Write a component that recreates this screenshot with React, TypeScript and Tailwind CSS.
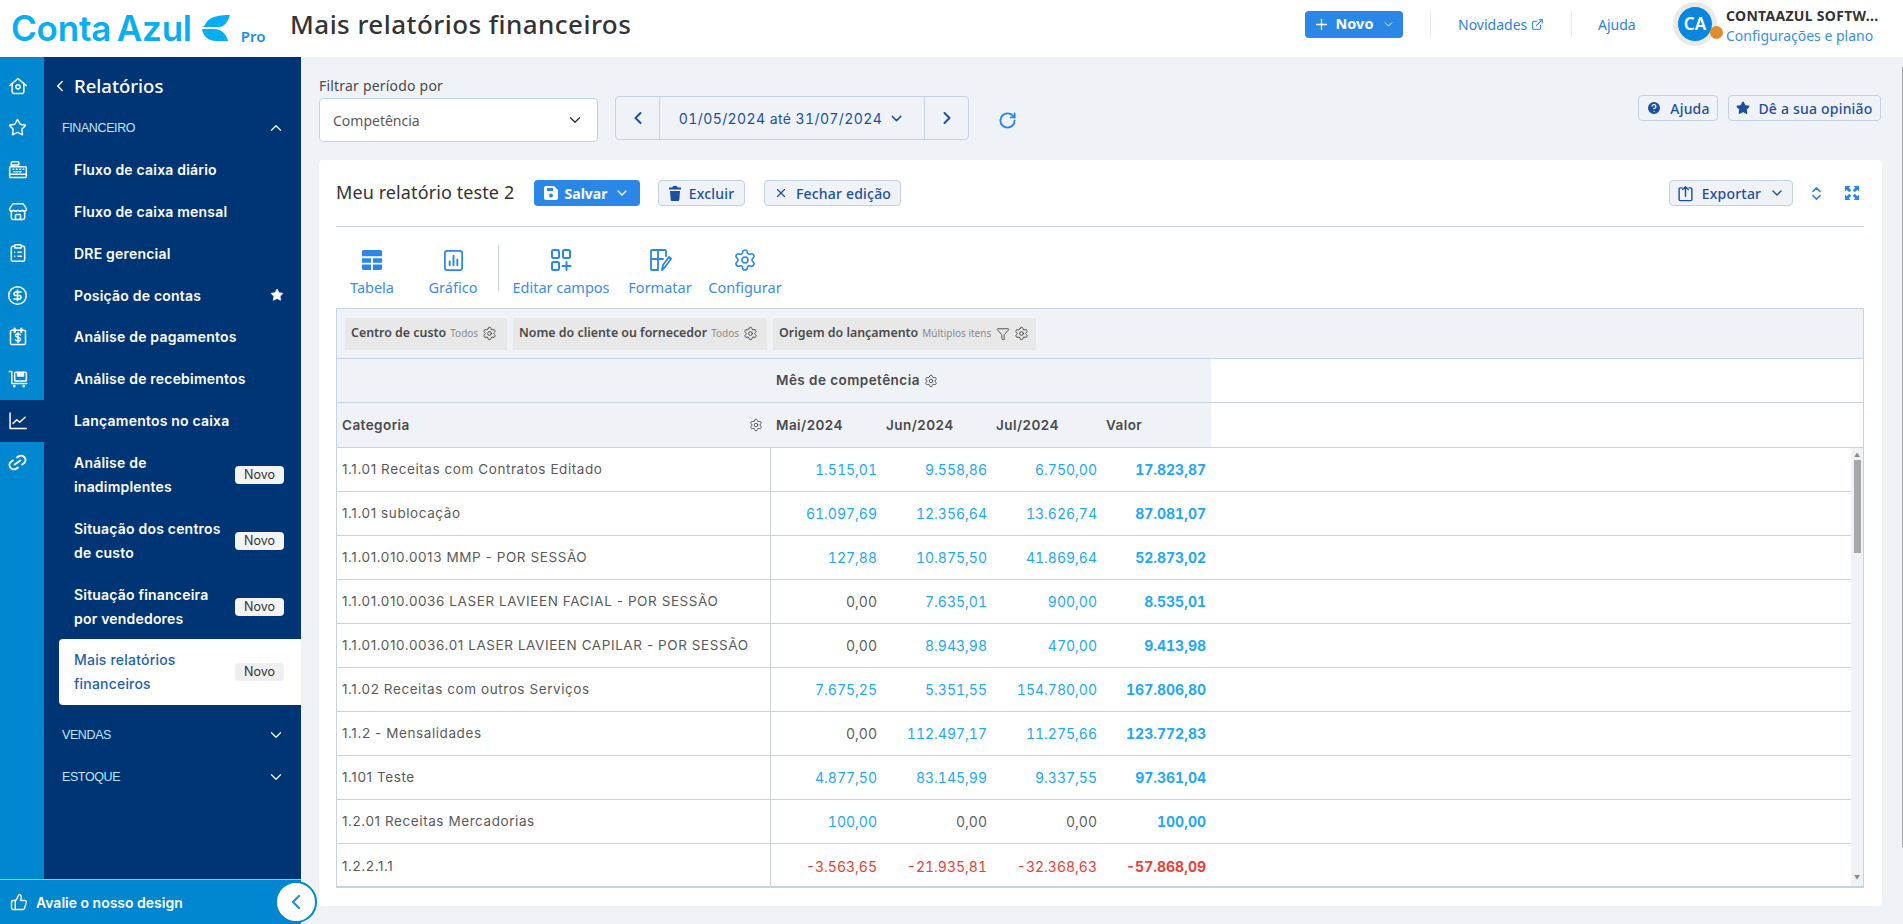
import type { ReactNode } from "react";
import {
  ChevronDown, ChevronLeft, ChevronRight, ChevronUp, ChevronsUpDown, CircleDollarSign, CircleHelp, ClipboardList,
  ExternalLink, Filter, Link2, Plus, RotateCw, Settings, Star, Store, ThumbsUp, X,
} from "lucide-react";

const rows = [
  ["1.1.01 Receitas com Contratos Editado", "1.515,01", "9.558,86", "6.750,00", "17.823,87"],
  ["1.1.01 sublocação", "61.097,69", "12.356,64", "13.626,74", "87.081,07"],
  ["1.1.01.010.0013 MMP - POR SESSÃO", "127,88", "10.875,50", "41.869,64", "52.873,02"],
  ["1.1.01.010.0036 LASER LAVIEEN FACIAL - POR SESSÃO", "0,00", "7.635,01", "900,00", "8.535,01"],
  ["1.1.01.010.0036.01 LASER LAVIEEN CAPILAR - POR SESSÃO", "0,00", "8.943,98", "470,00", "9.413,98"],
  ["1.1.02 Receitas com outros Serviços", "7.675,25", "5.351,55", "154.780,00", "167.806,80"],
  ["1.1.2 - Mensalidades", "0,00", "112.497,17", "11.275,66", "123.772,83"],
  ["1.101 Teste", "4.877,50", "83.145,99", "9.337,55", "97.361,04"],
  ["1.2.01 Receitas Mercadorias", "100,00", "0,00", "0,00", "100,00"],
  ["1.2.2.1.1", "-3.563,65", "-21.935,81", "-32.368,63", "-57.868,09"],
];

function numColor(v: string) {
  if (v.startsWith("-")) return "text-[#ea3f38]";
  if (v === "0,00") return "text-[#5f5f5f]";
  return "text-[#1fa8f6]";
}

function Svg({ children, size = 20, stroke = 1.8 }: { children: ReactNode; size?: number; stroke?: number }) {
  return (
    <svg width={size} height={size} viewBox="0 0 24 24" fill="none" stroke="currentColor" strokeWidth={stroke} strokeLinecap="round" strokeLinejoin="round">
      {children}
    </svg>
  );
}

function RailIcon({ children, active }: { children: ReactNode; active?: boolean }) {
  return (
    <div className={`h-[41.875px] pr-[9px] flex items-center justify-center text-white ${active ? "bg-[#003575]" : ""}`}>
      {children}
    </div>
  );
}

function Rail() {
  return (
    <div className="w-[44px] shrink-0 bg-[#0087d0] pt-[8px]">
      <RailIcon>
        <Svg>
          <path d="M2 11.5 12 3l10 8.5" />
          <path d="M5 9.5V19a2 2 0 0 0 2 2h10a2 2 0 0 0 2-2V9.5" />
          <circle cx="12" cy="13" r="2.5" />
        </Svg>
      </RailIcon>
      <RailIcon><Star size={19} strokeWidth={1.8} /></RailIcon>
      <RailIcon>
        <Svg>
          <rect x="4" y="2" width="9" height="4" rx="1" />
          <path d="M4 6v2M3 8h18a1 1 0 0 1 1 1v8H2V9a1 1 0 0 1 1-1z" />
          <path d="M2 17v3a1 1 0 0 0 1 1h18a1 1 0 0 0 1-1v-3" />
          <path d="M6 11h1M10 11h1M14 11h1M18 11h1M7 14h10" strokeDasharray="1.5 2" />
        </Svg>
      </RailIcon>
      <RailIcon><Store size={20} strokeWidth={1.8} /></RailIcon>
      <RailIcon><ClipboardList size={20} strokeWidth={1.8} /></RailIcon>
      <RailIcon><CircleDollarSign size={21} strokeWidth={1.8} /></RailIcon>
      <RailIcon>
        <Svg>
          <rect x="3" y="4" width="18" height="17" rx="1.5" />
          <path d="M8 2v4M16 2v4" strokeWidth="2.6" />
          <path d="M15 9.5c-.5-1-1.5-1.5-3-1.5-1.8 0-3 .9-3 2.2 0 3 6 1.6 6 4.4 0 1.3-1.3 2.2-3 2.2-1.5 0-2.6-.6-3.1-1.6M12 6.8V18.5" strokeWidth="1.7" />
        </Svg>
      </RailIcon>
      <RailIcon>
        <Svg>
          <path d="M1.5 3H4.5V17.5H22.5" />
          <rect x="8" y="4" width="14" height="10.5" rx="1" />
          <path d="M11.5 4v4.5h7V4" fill="currentColor" />
          <circle cx="7.5" cy="20.5" r=".8" />
          <circle cx="19" cy="20.5" r=".8" />
        </Svg>
      </RailIcon>
      <RailIcon active>
        <Svg>
          <path d="M2.5 2.5V21H22" />
          <path d="M6 15l4.5-4.5 3.5 3 6.5-6" />
        </Svg>
      </RailIcon>
      <RailIcon><Link2 size={21} strokeWidth={2.2} className="-rotate-[35deg]" /></RailIcon>
    </div>
  );
}

function NavItem({ label, star, badge, active }: { label: ReactNode; star?: boolean; badge?: boolean; active?: boolean }) {
  return (
    <div
      className={`flex items-center justify-between pr-[17px] text-[14px] tracking-[0.2px] ${badge ? "h-[66px] leading-[24px]" : "h-[41.75px]"} ${
        active ? "ml-[15px] pl-[15px] bg-white rounded-l-[4px] text-[#1f5fb4] font-medium" : `pl-[30px] text-white font-semibold ${badge ? "pt-[1px]" : ""}`
      }`}
    >
      <span>{label}</span>
      {star && <Star size={14} fill="white" strokeWidth={1} />}
      {badge && (
        <span className={`w-[49px] h-[18px] rounded-[4px] flex items-center justify-center text-[12.5px] tracking-normal leading-none font-normal text-[#333] ${active ? "bg-[#efefef]" : "bg-[#f4f4f4]"}`}>
          Novo
        </span>
      )}
    </div>
  );
}

function SectionRow({ label, open }: { label: string; open?: boolean }) {
  return (
    <div className="h-[42px] flex items-center justify-between pl-[18px] pr-[16px] text-[#bfe4fb] font-['Liberation_Sans',sans-serif] text-[12.5px]">
      <span className="tracking-[-0.4px]">{label}</span>
      {open ? <ChevronUp size={18} className="text-white" strokeWidth={1.6} /> : <ChevronDown size={18} className="text-white" strokeWidth={1.6} />}
    </div>
  );
}

function Sidebar() {
  return (
    <aside className="relative w-[301px] shrink-0 flex flex-col">
      <div className="flex-1 flex">
        <Rail />
        <nav className="flex-1 bg-[#003575] pt-[8px]">
          <div className="h-[42px] flex items-center pl-[7px] text-white font-['Noto_Sans',sans-serif] font-medium text-[18.5px]">
            <ChevronLeft size={18} strokeWidth={2} />
            <span className="ml-[5px]">Relatórios</span>
          </div>
          <SectionRow label="FINANCEIRO" open />
          <NavItem label="Fluxo de caixa diário" />
          <NavItem label="Fluxo de caixa mensal" />
          <NavItem label="DRE gerencial" />
          <NavItem label="Posição de contas" star />
          <NavItem label="Análise de pagamentos" />
          <NavItem label="Análise de recebimentos" />
          <NavItem label="Lançamentos no caixa" />
          <NavItem label={<>Análise de<br />inadimplentes</>} badge />
          <NavItem label={<>Situação dos centros<br />de custo</>} badge />
          <NavItem label={<>Situação financeira<br />por vendedores</>} badge />
          <NavItem label={<>Mais relatórios<br />financeiros</>} badge active />
          <div className="h-[9px]" />
          <SectionRow label="VENDAS" />
          <SectionRow label="ESTOQUE" />
        </nav>
      </div>
      <div className="h-[45px] shrink-0 bg-[#0087d0] border-t border-[#8fc8ea] flex items-center pl-[10px] text-white font-semibold text-[14px] gap-[8px]">
        <ThumbsUp size={18} strokeWidth={1.8} />
        <span>Avalie o nosso design</span>
      </div>
      <div className="absolute left-[275px] bottom-[1px] w-[42px] h-[42px] rounded-full bg-white border-2 border-[#0087d0] flex items-center justify-center text-[#2a87e8]">
        <ChevronLeft size={24} strokeWidth={2.2} />
      </div>
    </aside>
  );
}

function Header() {
  return (
    <header className="h-[57px] shrink-0 bg-white flex items-center pb-[9px] font-['Noto_Sans',sans-serif]">
      <div className="w-[290px] shrink-0 pl-[11px] pt-[8px] flex items-center">
        <span className="font-['Inter',sans-serif] font-semibold text-[35px] leading-none text-[#08aef2] tracking-[-0.2px] [word-spacing:-3px] whitespace-nowrap">Conta Azul</span>
        <svg width="28" height="26" viewBox="0 0 28 26" className="ml-[10px] shrink-0" fill="#08aef2">
          <path d="M28 0C18 0 8 1 4 8 3 10 2 11.5 0 12h17c6 0 9-6 11-12z" />
          <path d="M0 14c1 7 6 12 14 12h12c-2-7-6-12-14-12z" />
        </svg>
        <span className="ml-[11px] mt-[16px] text-[15px] font-semibold text-[#1c8fe0]">Pro</span>
      </div>
      <h1 className="text-[26px] mt-[1px] font-medium text-[#333] tracking-[0.45px] whitespace-nowrap">Mais relatórios financeiros</h1>
      <div className="ml-auto flex items-center pr-[22px]">
        <button className="w-[98px] h-[27px] rounded-[4px] bg-[#2a87e8] text-white flex items-center justify-center gap-[6px] text-[14.5px] font-bold">
          <Plus size={17} strokeWidth={1.8} />
          Novo
          <ChevronDown size={13} className="ml-[3px]" strokeWidth={1.6} />
        </button>
        <div className="ml-[27px] w-px h-[26px] bg-[#e8edf3]" />
        <a className="ml-[27px] w-[86px] flex items-center gap-[4px] text-[14px] text-[#2f80e4]">
          Novidades
          <ExternalLink size={13} strokeWidth={2} />
        </a>
        <div className="ml-[27px] w-px h-[26px] bg-[#e8edf3]" />
        <a className="ml-[26px] w-[40px] text-[14px] text-[#2f80e4]">Ajuda</a>
        <div className="relative ml-[35px] w-[44px] h-[44px] rounded-full bg-[#e9e9e9] flex items-center justify-center">
          <div className="w-[34px] h-[34px] rounded-full bg-[#0a87dc] text-white flex items-center justify-center text-[17px] font-semibold">CA</div>
          <span className="absolute left-[37px] top-[24px] w-[13px] h-[13px] rounded-full bg-[#e08b2e]" />
        </div>
        <div className="ml-[9px] w-[155px] pt-[5px]">
          <div className="text-[14px] font-bold text-[#333] leading-[18px] tracking-[0.3px] whitespace-nowrap">CONTAAZUL SOFTW...</div>
          <div className="text-[14px] text-[#3d8de8] leading-[20px] mt-[1px] whitespace-nowrap">Configurações e plano</div>
        </div>
      </div>
    </header>
  );
}

function OutlineBtn({ icon, label, trail, className }: { icon: ReactNode; label: string; trail?: ReactNode; className: string }) {
  return (
    <button className={`h-[26px] rounded-[4px] border border-[#c5d0e0] bg-[#eff2f7] text-[#1d4fa0] text-[14px] tracking-[0.2px] font-medium flex items-center justify-center gap-[8px] whitespace-nowrap ${className}`}>
      {icon}
      {label}
      {trail}
    </button>
  );
}

function FilterBar() {
  return (
    <div className="flex items-start h-[103px] pl-[18px] pr-[22px] pt-[22px] font-['Noto_Sans',sans-serif]">
      <div className="w-[279px]">
        <div className="text-[14px] tracking-[0.2px] leading-[14px] text-[#4a4a4a] mb-[5px]">Filtrar período por</div>
        <div className="h-[44px] bg-white border border-[#c5d0e0] rounded-[4px] flex items-center justify-between pl-[13px] pr-[13px] text-[14px] text-[#5a5a5a]">
          Competência
          <ChevronDown size={18} strokeWidth={1.8} className="text-[#333]" />
        </div>
      </div>
      <div className="ml-[17px] mt-[17px] h-[44px] w-[354px] border border-[#c5d0e0] rounded-[4px] flex items-center text-[#1d4fa0]">
        <div className="w-[44px] h-full flex items-center justify-center border-r border-[#c5d0e0]"><ChevronLeft size={20} strokeWidth={2.4} /></div>
        <div className="flex-1 flex items-center justify-center gap-[6px] text-[14px] tracking-[0.4px] tabular-nums font-['Inter',sans-serif]">
          01/05/2024 até 31/07/2024
          <ChevronDown size={17} strokeWidth={2} />
        </div>
        <div className="w-[44px] h-full flex items-center justify-center border-l border-[#c5d0e0]"><ChevronRight size={20} strokeWidth={2.4} /></div>
      </div>
      <RotateCw size={19} strokeWidth={2.4} className="ml-[29px] mt-[32px] text-[#2a87e8]" />
      <div className="ml-auto mt-[16px] flex gap-[10px]">
        <OutlineBtn className="w-[80px]" icon={<CircleHelp size={16} fill="#1d4fa0" stroke="#eff2f7" />} label="Ajuda" />
        <OutlineBtn className="w-[153px]" icon={<Star size={14} fill="#1d4fa0" />} label="Dê a sua opinião" />
      </div>
    </div>
  );
}

function ToolBtn({ icon, label, className }: { icon: ReactNode; label: string; className: string }) {
  return (
    <div className={`flex flex-col items-center text-[#2a87e8] ${className}`}>
      <div className="h-[26px] flex items-center">{icon}</div>
      <span className="text-[14.5px] leading-[18px] mt-[5px] whitespace-nowrap text-[#3d8de8]">{label}</span>
    </div>
  );
}

function Chip({ title, value, className, filter }: { title: string; value: string; className: string; filter?: boolean }) {
  return (
    <div className={`h-[32px] bg-[#e8e8e8] flex items-center pl-[6px] text-[12.4px] whitespace-nowrap ${className}`}>
      <span className="font-semibold text-[#4a4a4a]">{title}</span>
      <span className="ml-[4px] text-[10px] text-[#8a8a8a]">{value}</span>
      {filter && <Filter size={14} strokeWidth={1.5} className="ml-[5px] text-[#444]" />}
      <Settings size={15} strokeWidth={1.5} className="ml-[4px] text-[#444]" />
    </div>
  );
}

function Card() {
  return (
    <section className="h-[746px] bg-white rounded-[4px] ml-[18px] mr-[21px] pl-[17px] pr-[18px] pt-[20px]">
      <div className="h-[47px] flex items-start border-b border-[#c9d3e0] font-['Noto_Sans',sans-serif]">
        <h2 className="w-[198px] text-[18px] tracking-[0.1px] leading-[24px] text-[#333]">Meu relatório teste 2</h2>
        <button className="w-[106px] h-[26px] rounded-[4px] bg-[#2a87e8] text-white text-[14px] font-bold flex items-center justify-center gap-[7px]">
          <svg width="14" height="14" viewBox="0 0 14 14" fill="white">
            <path fillRule="evenodd" d="M2 0h8l4 4v8a2 2 0 0 1-2 2H2a2 2 0 0 1-2-2V2a2 2 0 0 1 2-2zm1 2v3h6V2zm4 5.5a2 2 0 1 0 0 4 2 2 0 0 0 0-4z" />
          </svg>
          Salvar
          <ChevronDown size={16} strokeWidth={2} />
        </button>
        <OutlineBtn
          className="w-[87px] ml-[18px]"
          icon={
            <svg width="12" height="15" viewBox="0 0 12 15" fill="#1d4fa0">
              <path d="M4 0h4l.5 1.5H12V3.5H0V1.5h3.5zM1 5h10l-.7 9a1 1 0 0 1-1 1H2.7a1 1 0 0 1-1-1z" />
            </svg>
          }
          label="Excluir"
        />
        <OutlineBtn className="w-[137px] ml-[19px]" icon={<X size={14} strokeWidth={2} />} label="Fechar edição" />
        <div className="ml-auto flex items-center h-[26px]">
          <OutlineBtn
            className="w-[124px]"
            icon={
              <Svg size={17} stroke={2}>
                <path d="M7 4H4.5A1.5 1.5 0 0 0 3 5.5v15A1.5 1.5 0 0 0 4.5 22h15a1.5 1.5 0 0 0 1.5-1.5v-15A1.5 1.5 0 0 0 19.5 4H17" />
                <path d="M12 16V3M8 6.5 12 2.5l4 4" />
              </Svg>
            }
            label="Exportar"
            trail={<ChevronDown size={16} strokeWidth={2} />}
          />
          <ChevronsUpDown size={17} strokeWidth={2.2} className="ml-[15px] text-[#2a87e8]" />
          <svg width="14" height="14" viewBox="0 0 14 14" fill="#2a87e8" className="ml-[20px] mr-[5px]">
            <path d="M0 0h5.5L3.8 1.7 6.3 4.2 4.2 6.3 1.7 3.8 0 5.5zM14 0v5.5L12.3 3.8 9.8 6.3 7.7 4.2 10.2 1.7 8.5 0zM0 14V8.5L1.7 10.2 4.2 7.7 6.3 9.8 3.8 12.3 5.5 14zM14 14H8.5L10.2 12.3 7.7 9.8 9.8 7.7 12.3 10.2 14 8.5z" />
          </svg>
        </div>
      </div>
      <div className="h-[81px] flex items-start pt-[20px] font-['Noto_Sans',sans-serif]">
        <ToolBtn className="w-[72px]" label="Tabela" icon={
          <svg width="22" height="22" viewBox="0 0 24 24" fill="#2a87e8"><path d="M1 3a2 2 0 0 1 2-2h18a2 2 0 0 1 2 2v5H1zM1 10h10v5H1zM13 10h10v5H13zM1 17h10v6H3a2 2 0 0 1-2-2zM13 17h10v4a2 2 0 0 1-2 2h-8z" /></svg>
        } />
        <ToolBtn className="w-[90px]" label="Gráfico" icon={
          <Svg size={23}>
            <rect x="3" y="2" width="18" height="20" rx="2.5" />
            <path d="M8 17v-4M12 17V7M16 17v-6" strokeWidth="2" />
          </Svg>
        } />
        <div className="w-px h-[46px] bg-[#c9d3e0] -mt-[2px]" />
        <ToolBtn className="w-[100px] ml-[12px]" label="Editar campos" icon={
          <Svg size={24} stroke={2}>
            <rect x="3" y="2" width="7" height="8" rx="1.5" />
            <rect x="14" y="2" width="7" height="8" rx="1.5" />
            <rect x="3" y="14" width="7" height="8" rx="1.5" />
            <path d="M17.5 14v8M13.5 18h8" />
          </Svg>
        } />
        <ToolBtn className="w-[64px] ml-[17px]" label="Formatar" icon={
          <Svg size={24}>
            <path d="M10 22H4a1 1 0 0 1-1-1V3a1 1 0 0 1 1-1h13a1 1 0 0 1 1 1v5M3 11h12M10 2v20" />
            <path d="M14 22l1-5 6-8 2 2-6 8z" />
          </Svg>
        } />
        <ToolBtn className="w-[74px] ml-[16px]" label="Configurar" icon={<Settings size={24} strokeWidth={1.6} />} />
      </div>
      <div className="border border-b-2 border-[#c9d3e0] h-[580px] flex flex-col overflow-hidden">
        <div className="h-[50px] shrink-0 bg-[#eff2f7] border-b border-[#c9d3e0] flex items-center pl-[8px] gap-[6px] font-['Noto_Sans',sans-serif]">
          <Chip className="w-[162px]" title="Centro de custo" value="Todos" />
          <Chip className="w-[254px]" title="Nome do cliente ou fornecedor" value="Todos" />
          <Chip className="w-[263px]" title="Origem do lançamento" value="Múltiplos itens" filter />
        </div>
        <div className="h-[44px] shrink-0 border-b border-[#c9d3e0] flex">
          <div className="w-[874px] bg-[#eff2f7] flex items-center pl-[439px] text-[13.5px] tracking-[0.45px] font-semibold text-[#4a4a4a] gap-[4px]">
            Mês de competência
            <Settings size={14} strokeWidth={1.5} />
          </div>
        </div>
        <div className="h-[45px] shrink-0 border-b border-[#c9d3e0] flex">
          <div className="w-[874px] bg-[#eff2f7] flex items-center text-[13.5px] tracking-[0.45px] font-semibold text-[#4a4a4a]">
            <div className="w-[437px] pl-[5px] pr-[11px] flex items-center justify-between">
              Categoria
              <Settings size={14} strokeWidth={1.5} />
            </div>
            <div className="w-[110px] pl-[2px]">Mai/2024</div>
            <div className="w-[110px] pl-[2px]">Jun/2024</div>
            <div className="w-[110px] pl-[2px]">Jul/2024</div>
            <div className="w-[107px] pl-[2px]">Valor</div>
          </div>
        </div>
        <div className="flex-1 flex min-h-0">
          <div className="flex-1">
            {rows.map((r) => (
              <div key={r[0]} className="h-[44px] border-b border-[#c9d3e0] last:border-b-0 flex items-stretch">
                <div className="w-[434px] pl-[5px] flex items-center text-[13.5px] tracking-[0.58px] text-[#5a5a5a] border-r border-[#c9d3e0] whitespace-nowrap">{r[0]}</div>
                {r.slice(1, 4).map((v, i) => (
                  <div key={i} className={`${i === 0 ? "w-[106px]" : "w-[110px]"} flex items-center justify-end text-[14px] tabular-nums ${numColor(v)}`}>{v}</div>
                ))}
                <div className={`w-[109px] flex items-center justify-end text-[14px] tabular-nums font-bold ${numColor(r[4])}`}>{r[4]}</div>
              </div>
            ))}
          </div>
          <div className="w-[12px] bg-[#eff2f7] flex flex-col items-center shrink-0 text-[#8a8a8a]">
            <span className="mt-[3px] text-[6px] leading-[8px]">▲</span>
            <div className="mt-[1px] w-[7px] h-[93px] bg-[#a6a7ab]" />
            <span className="mt-auto mb-[4px] text-[6px] leading-[8px]">▼</span>
          </div>
        </div>
      </div>
    </section>
  );
}

export default function App() {
  return (
    <div className="relative w-[1903px] h-[924px] overflow-hidden flex flex-col bg-[#eff2f7] font-['Inter',sans-serif]">
      <Header />
      <div className="flex-1 flex min-h-0">
        <Sidebar />
        <main className="flex-1 min-w-0">
          <FilterBar />
          <Card />
        </main>
      </div>
      <div className="absolute right-0 top-[67px] w-px h-[780px] bg-[#a6a7ab]" />
    </div>
  );
}
